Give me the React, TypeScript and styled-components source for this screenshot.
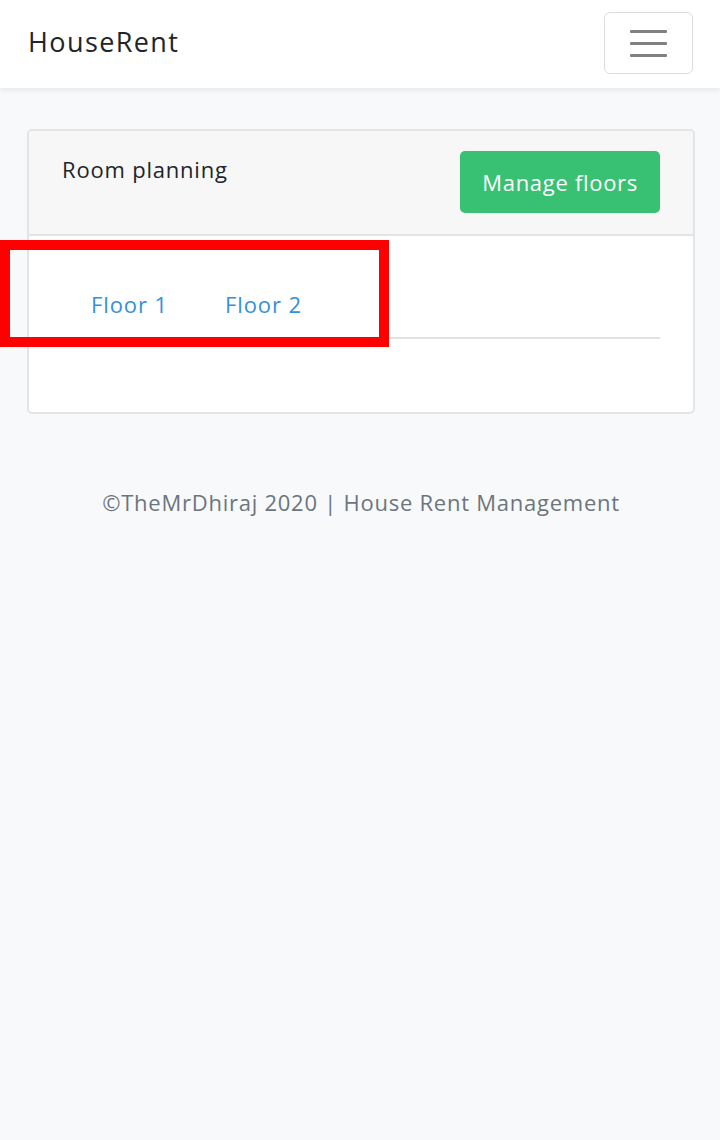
import React from "react";
import styled, { createGlobalStyle } from "styled-components";

const GlobalStyle = createGlobalStyle`
  html, body {
    margin: 0;
    padding: 0;
    background: #f8f9fb;
    font-family: "Open Sans", Lato, sans-serif;
    letter-spacing: 0.75px;
  }
  * {
    box-sizing: border-box;
  }
`;

const App: React.FC = () => {
  return (
    <>
      <GlobalStyle />
      <Page>
        <Navbar>
          <Brand>HouseRent</Brand>
          <Toggler aria-label="Toggle navigation">
            <TogglerBar />
            <TogglerBar />
            <TogglerBar />
          </Toggler>
        </Navbar>
        <Main>
          <Card>
            <CardHeader>
              <CardTitle>Room planning</CardTitle>
              <GreenButton>Manage floors</GreenButton>
            </CardHeader>
            <CardBody>
              <Tabs>
                <TabLink>Floor 1</TabLink>
                <TabLink>Floor 2</TabLink>
              </Tabs>
              <TabContent />
            </CardBody>
          </Card>
          <Footer>©TheMrDhiraj 2020 | House Rent Management</Footer>
        </Main>
        <Highlight />
      </Page>
    </>
  );
};

export default App;

const Page = styled.div`
  position: relative;
  min-height: 1140px;
  background: #f8f9fb;
`;

const Navbar = styled.nav`
  height: 88px;
  background: #ffffff;
  display: flex;
  align-items: center;
  justify-content: space-between;
  padding: 0 27px 0 28px;
  box-shadow: 0 2px 6px rgba(0, 0, 0, 0.08);
`;

const Brand = styled.div`
  font-size: 27px;
  line-height: 36px;
  letter-spacing: 1.4px;
  margin-top: -4px;
  color: #212529;
`;

const Toggler = styled.button`
  width: 89px;
  height: 62px;
  margin-top: -2px;
  border: 1.5px solid #dcdcdc;
  border-radius: 6px;
  background: transparent;
  display: flex;
  flex-direction: column;
  align-items: center;
  justify-content: center;
  gap: 9px;
  padding: 0;
`;

const TogglerBar = styled.span`
  display: block;
  width: 37px;
  height: 3px;
  border-radius: 1px;
  background: #808080;
`;

const Main = styled.main`
  padding: 41px 25px 0 27px;
`;

const Card = styled.div`
  background: #ffffff;
  border: 2px solid #e2e4e7;
  border-radius: 5px;
  overflow: hidden;
`;

const CardHeader = styled.div`
  height: 105px;
  background: #f7f7f7;
  border-bottom: 2px solid #e2e4e7;
  display: flex;
  justify-content: space-between;
  align-items: flex-start;
  padding: 20px 33px 0 33px;
`;

const CardTitle = styled.div`
  font-size: 22px;
  line-height: 36px;
  letter-spacing: 0.8px;
  color: #212529;
`;

const GreenButton = styled.button`
  height: 62px;
  padding: 0 22px;
  background: #38c172;
  color: #ffffff;
  border: none;
  border-radius: 5px;
  font-family: "Open Sans", Lato, sans-serif;
  font-size: 22px;
  letter-spacing: 0.7px;
`;

const CardBody = styled.div`
  padding: 35px 33px 0 33px;
  height: 176px;
`;

const Tabs = styled.div`
  display: flex;
  border-bottom: 2px solid #dee2e6;
  height: 68px;
`;

const TabLink = styled.a`
  font-size: 22px;
  letter-spacing: 0.9px;
  color: #3490dc;
  padding: 0 28px 0 29px;
  line-height: 66px;
  cursor: pointer;
`;

const TabContent = styled.div``;

const Footer = styled.div`
  margin-top: 73px;
  text-align: center;
  font-size: 22px;
  color: #6c757d;
`;

const Highlight = styled.div`
  position: absolute;
  left: 0;
  top: 240px;
  width: 389px;
  height: 107px;
  border: 10px solid #ff0000;
  pointer-events: none;
`;
